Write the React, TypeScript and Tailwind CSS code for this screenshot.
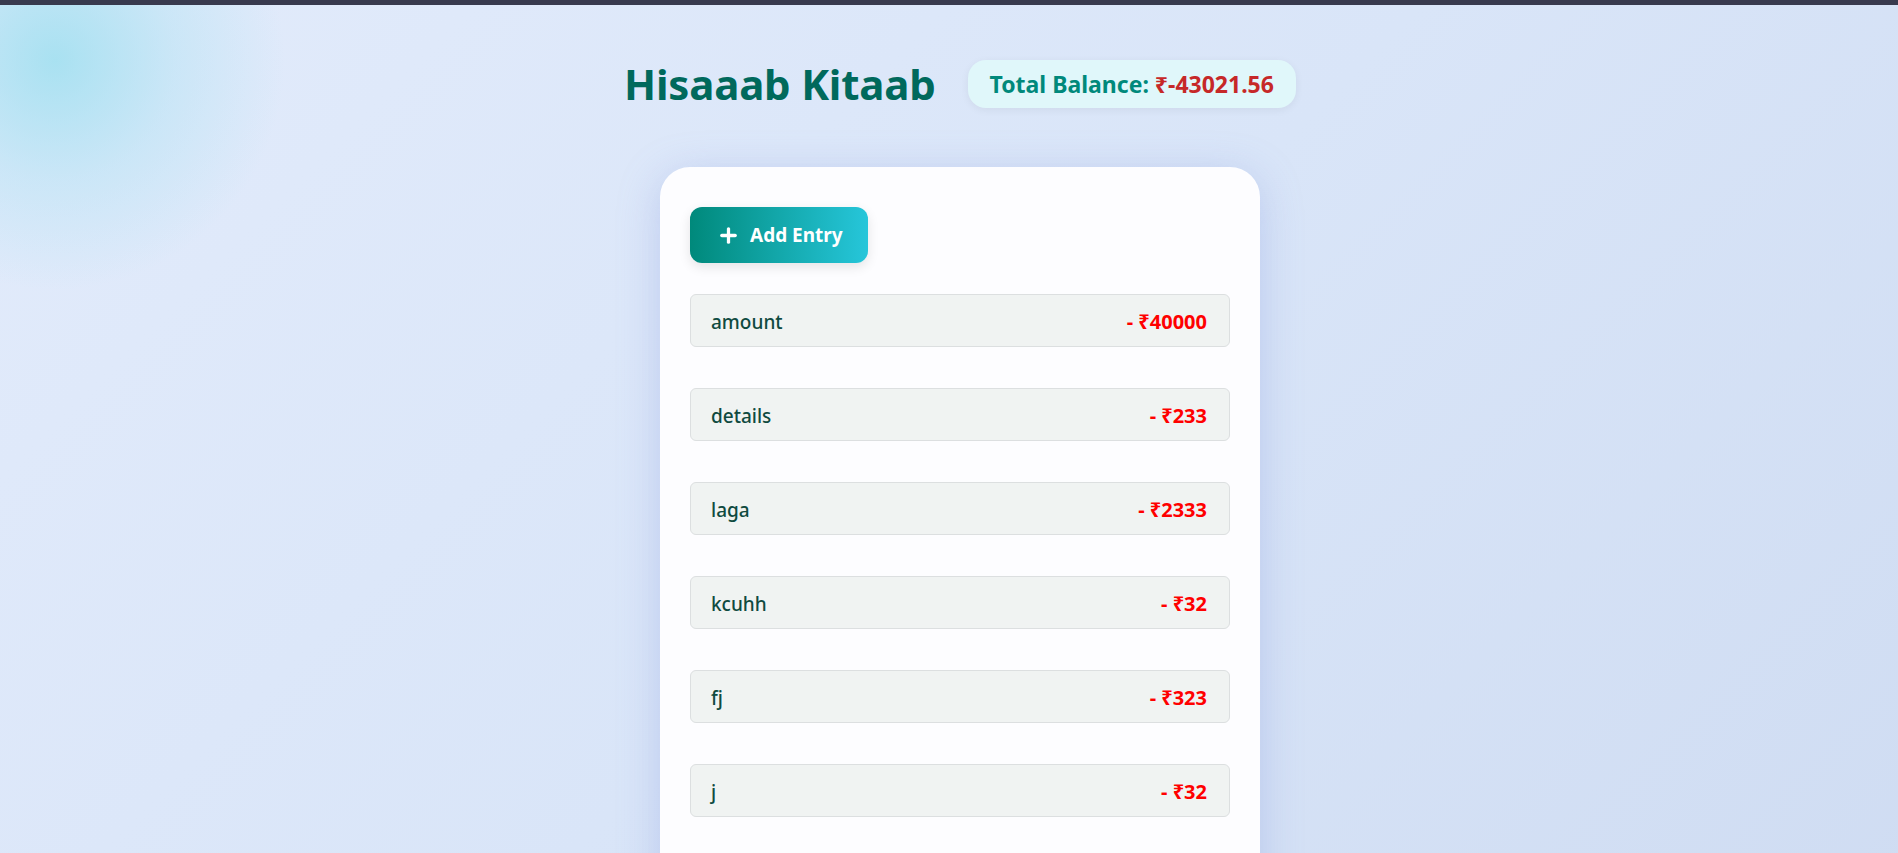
import { Plus } from "lucide-react";

const entries = [
  { label: "amount", amount: 40000 },
  { label: "details", amount: 233 },
  { label: "laga", amount: 2333 },
  { label: "kcuhh", amount: 32 },
  { label: "fj", amount: 323 },
  { label: "j", amount: 32 },
];

export default function App() {
  return (
    <div className="min-h-screen font-['Noto_Sans',sans-serif] bg-[radial-gradient(circle_at_55px_60px,rgba(150,222,238,0.75)_0,rgba(170,225,242,0.4)_120px,rgba(200,228,248,0)_230px),linear-gradient(135deg,#e2ebfb_0%,#d9e5f8_50%,#cfdcf2_100%)]">
      <div className="h-[5px] bg-[#383a4e]" />

      <div className="pl-[22px] pt-[55px] pb-10">
        <header className="flex items-center justify-center gap-8">
          <h1 className="text-[42px] leading-none font-bold text-[#00695c] tracking-[-0.2px]">Hisaaab Kitaab</h1>
          <div className="h-[48px] px-[22px] flex items-center rounded-[18px] bg-[#e0f7fa] shadow-[0_2px_8px_rgba(0,0,0,0.06)] text-[23px] font-bold">
            <span className="text-[#00897b]">Total Balance:</span>
            <span className="ml-[6px] text-[#c62828]">₹-43021.56</span>
          </div>
        </header>

        <div className="mt-[59px] mx-auto w-[600px] bg-[#fdfdff] rounded-[30px] px-[30px] pt-[40px] pb-24 shadow-[0_8px_40px_rgba(130,150,220,0.35)]">
          <button className="h-[56px] pl-[27px] pr-[25px] flex items-center gap-[10px] rounded-[12px] text-white text-[19px] font-bold bg-[linear-gradient(90deg,#00897b,#26c6da)] shadow-[0_4px_12px_rgba(0,0,0,0.1)]">
            <Plus size={23} strokeWidth={3.4} />
            Add Entry
          </button>

          <div className="mt-[31px] flex flex-col gap-[41px]">
            {entries.map(e => (
              <div key={e.label} className="h-[53px] flex items-center justify-between pl-[20px] pr-[22px] pt-[3px] bg-[#f0f3f2] border border-[#dcdfe0] rounded-[6px]">
                <span className="text-[19px] font-medium text-[#0f4a40]">{e.label}</span>
                <span className="text-[20px] font-bold text-[#ff0000]">- ₹{e.amount}</span>
              </div>
            ))}
          </div>
        </div>
      </div>
    </div>
  );
}
